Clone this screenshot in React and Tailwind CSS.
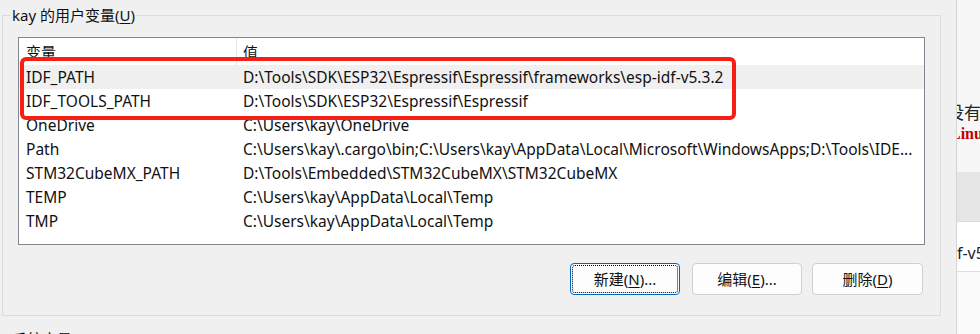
const FONT = "font-['Noto_Sans','Noto_Sans_CJK_SC',sans-serif]";

const rows = [
  { name: 'IDF_PATH', value: 'D:\\Tools\\SDK\\ESP32\\Espressif\\Espressif\\frameworks\\esp-idf-v5.3.2', hover: true },
  { name: 'IDF_TOOLS_PATH', value: 'D:\\Tools\\SDK\\ESP32\\Espressif\\Espressif' },
  { name: 'OneDrive', value: 'C:\\Users\\kay\\OneDrive' },
  { name: 'Path', value: 'C:\\Users\\kay\\.cargo\\bin;C:\\Users\\kay\\AppData\\Local\\Microsoft\\WindowsApps;D:\\Tools\\IDE...' },
  { name: 'STM32CubeMX_PATH', value: 'D:\\Tools\\Embedded\\STM32CubeMX\\STM32CubeMX' },
  { name: 'TEMP', value: 'C:\\Users\\kay\\AppData\\Local\\Temp' },
  { name: 'TMP', value: 'C:\\Users\\kay\\AppData\\Local\\Temp' },
];

const Button = ({ label, hotkey, suffix, focused, className = '' }) => (
  <button
    className={`relative h-[32px] rounded-[4px] border bg-[#fdfdfd] text-[15px] leading-[20px] text-[#111] ${
      focused ? 'border-[#0067c0]' : 'border-[#d0d0d0]'
    } ${className}`}
  >
    {focused && (
      <span className="absolute inset-[1px] rounded-[3px] border border-dotted border-black"></span>
    )}
    {label}(<span className="underline underline-offset-2">{hotkey}</span>){suffix}
  </button>
);

const App = () => {
  return (
    <div className={`w-[980px] h-[334px] overflow-hidden flex bg-[#f0f0f0] text-[#111] ${FONT}`}>
      {/* dialog */}
      <div className="w-[957px] shrink-0 border-r border-[#d4d4d4]">
        <fieldset className="ml-[2px] mt-[5px] w-[939px] border border-[#dcdcdc]">
          <legend className="ml-[8px] px-[1px] text-[15px] leading-[20px]">
            kay 的用户变量(<span className="underline underline-offset-2">U</span>)
          </legend>

          <div className="px-[15px] pb-[20px]">
            {/* list view */}
            <div className="relative mt-[12px] h-[208px] border border-[#828790] bg-white text-[15.5px] leading-[20px]">
              <div className="flex h-[27px] items-center">
                <div className="w-[218px] h-full border-r border-[#e5e5e5] pl-[7px] flex items-center text-[15px]">变量</div>
                <div className="pl-[6px] text-[15px]">值</div>
              </div>
              {rows.map((r) => (
                <div key={r.name} className={`flex h-[24px] items-center ${r.hover ? 'bg-[#f0f0f0]' : ''}`}>
                  <div className="w-[218px] pl-[7px] whitespace-nowrap">{r.name}</div>
                  <div className="pl-[6px] whitespace-nowrap">{r.value}</div>
                </div>
              ))}
              {/* red highlight box */}
              <div className="absolute left-[1px] top-[19px] w-[716px] h-[63px] rounded-[6px] border-[4px] border-[#f81e14]"></div>
            </div>

            <div className="mt-[18px] flex justify-end pr-[2px]">
              <Button label="新建" hotkey="N" suffix="..." focused className="w-[110px]" />
              <Button label="编辑" hotkey="E" suffix="..." className="ml-[12px] w-[110px]" />
              <Button label="删除" hotkey="D" suffix="" className="ml-[10px] w-[111px]" />
            </div>
          </div>
        </fieldset>

        <div className="mt-[13px] pl-[12px] text-[15px] leading-[20px]">
          系统变量(<span className="underline underline-offset-2">S</span>)
        </div>
      </div>

      {/* window behind */}
      <div className="flex-1 overflow-hidden bg-[#f7f7f7] flex flex-col">
        <div className="h-[103px] shrink-0"></div>
        <div className="-ml-[10px] whitespace-nowrap text-[17px] leading-[20px] text-[#222]">没有</div>
        <div className="-ml-[7px] mt-[1px] whitespace-nowrap font-['Liberation_Serif',serif] font-bold text-[16px] leading-[20px] text-[#c00000]">Linux</div>
        <div className="h-[28px] shrink-0"></div>
        <div className="h-[50px] shrink-0 bg-[#e6e6e6] border-b border-[#dadada]"></div>
        <div className="h-[50px] shrink-0 bg-white border-b border-[#e0e0e0] flex items-center pt-[12px]">
          <span className="-ml-[14px] whitespace-nowrap text-[16px] text-[#222]">idf-v5.3.2</span>
        </div>
        <div className="flex-1 bg-[#fafafa]"></div>
      </div>
    </div>
  );
};

export default App;
